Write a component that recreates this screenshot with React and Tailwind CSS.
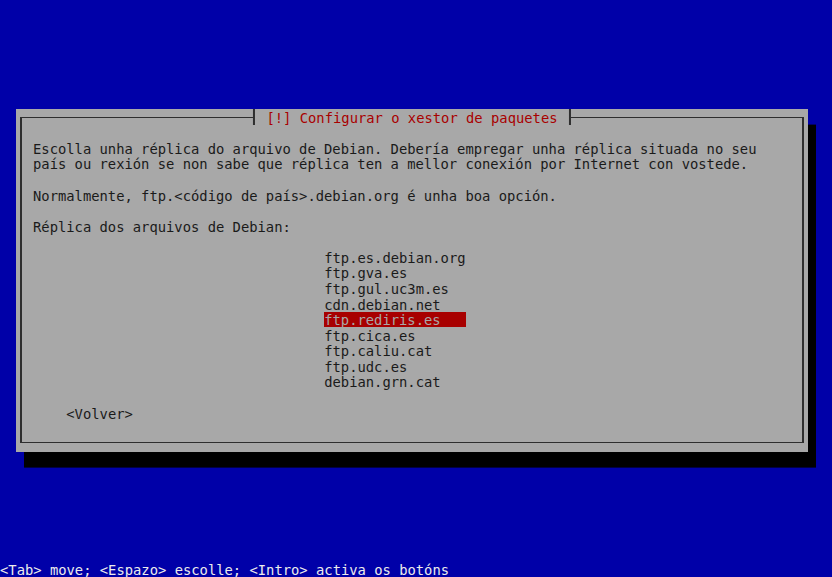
const mirrors = [
  "ftp.es.debian.org",
  "ftp.gva.es",
  "ftp.gul.uc3m.es",
  "cdn.debian.net",
  "ftp.rediris.es",
  "ftp.cica.es",
  "ftp.caliu.cat",
  "ftp.udc.es",
  "debian.grn.cat",
];

// one terminal line; the text sits a bit lower in the cell than the box
const Row = ({ children, className = "" }) => (
  <div className={`h-[15.59px] leading-[15.59px] whitespace-pre ${className}`}>
    <span className="relative top-[1.5px]">{children}</span>
  </div>
);

const App = () => {
  const selected = "ftp.rediris.es";

  return (
    <div className="w-[832px] h-[577px] bg-[#0000a8] flex flex-col overflow-hidden font-['DejaVu_Sans_Mono','Liberation_Mono',monospace] text-[13.82px]">
      <div className="h-[109px] shrink-0" />

      {/* dialog */}
      <div className="ml-[16px] w-[792px] h-[343px] shrink-0 bg-[#a8a8a8] shadow-[8px_15.6px_0_0_#000] px-[4px] pt-[7.7px] pb-[9px]">
        <div className="relative h-full border-x-2 border-y border-[#2e2e2e] pl-[11px] pt-[22.6px] text-[#1a1a1a]">
          <div className="absolute top-[-8.6px] left-1/2 -translate-x-1/2 h-[15.6px] leading-[15.6px] bg-[#a8a8a8] border-x-2 border-[#2e2e2e] px-[11.5px] text-[#a80000] whitespace-pre">
            <span className="relative top-[1.5px]">[!] Configurar o xestor de paquetes</span>
          </div>

          <Row>Escolla unha réplica do arquivo de Debian. Debería empregar unha réplica situada no seu</Row>
          <Row>país ou rexión se non sabe que réplica ten a mellor conexión por Internet con vostede.</Row>
          <Row />
          <Row>Normalmente, ftp.&lt;código de país&gt;.debian.org é unha boa opción.</Row>
          <Row />
          <Row>Réplica dos arquivos de Debian:</Row>
          <Row />

          <div className="ml-[291.2px] flex flex-col">
            {mirrors.map((m) => (
              <Row
                key={m}
                className={
                  m === selected
                    ? "w-[141.4px] bg-[#a80000] text-[#a8a8a8]"
                    : "w-[141.4px]"
                }
              >
                {m}
              </Row>
            ))}
          </div>

          <Row />
          <Row className="ml-[33.3px]">&lt;Volver&gt;</Row>
        </div>
      </div>

      <Row className="mt-auto shrink-0 text-[#ececec]">
        &lt;Tab&gt; move; &lt;Espazo&gt; escolle; &lt;Intro&gt; activa os botóns
      </Row>
    </div>
  );
};

export default App;
